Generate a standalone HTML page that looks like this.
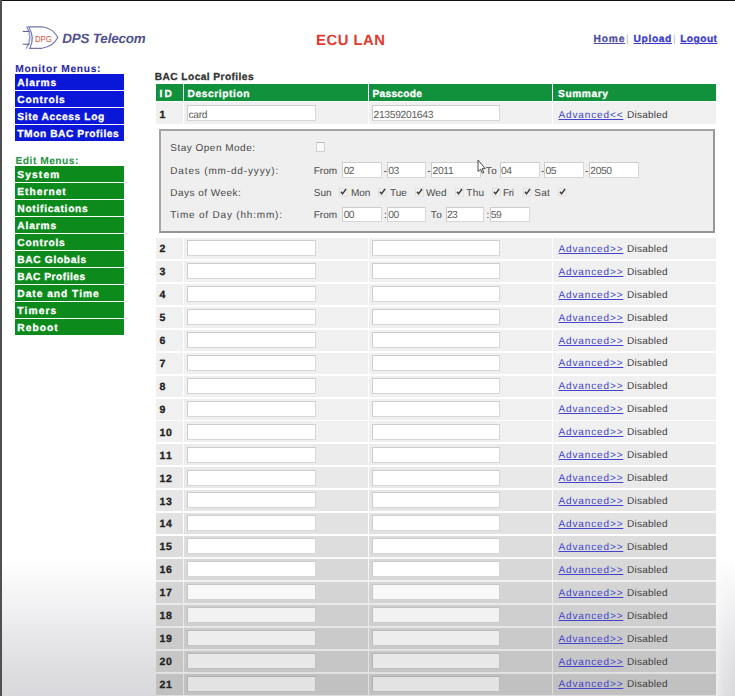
<!DOCTYPE html>
<html><head><meta charset="utf-8"><style>
html,body{margin:0;padding:0;width:735px;height:696px;overflow:hidden;}
body{position:relative;background:linear-gradient(to bottom, rgba(255,255,255,0) 0px, rgba(255,255,255,0) 558px, rgb(247,247,248) 585px, rgb(240,240,242) 610px, rgb(230,230,233) 640px, rgb(222,222,225) 670px, rgb(216,216,220) 696px), #fff;}
.t{position:absolute;white-space:nowrap;font-family:"Liberation Sans",sans-serif;text-rendering:geometricPrecision;}
.b{position:absolute;}
#w{position:absolute;left:0;top:0;width:735px;height:696px;}
</style></head><body><div id="w">
<svg class="b" style="left:18px;top:22px" width="46" height="30" viewBox="18 22 46 30">
<path d="M28.6 26.8 L42 26.8 Q53 28.3 57.8 37.6 Q53 46.8 42 48.3 L29.8 48.3 Q35.3 37.5 28.6 26.8 Z" fill="#fff" stroke="#7474b4" stroke-width="1.15"/>
<path d="M26.6 26.4 Q33.4 37.5 26.2 48.7" fill="none" stroke="#9c9cdc" stroke-width="1.5"/>
<path d="M22.8 31.4 H29.4 M22.8 44.2 H29.6" stroke="#404070" stroke-width="0.9"/>
<text x="34.9" y="41.5" font-family="Liberation Sans" font-size="9.8" fill="#d9503f" textLength="17" lengthAdjust="spacingAndGlyphs">DPG</text>
</svg>
<div class="t" style="left:62.30px;top:32px;font-size:13.4px;line-height:13.4px;color:#50508f;letter-spacing:-0.175px;font-weight:bold;font-style:italic;">DPS Telecom</div>
<div class="t" style="left:316.00px;top:34px;font-size:14.8px;line-height:14.8px;color:#e23a2e;letter-spacing:0.537px;font-weight:bold;">ECU LAN</div>
<div class="t" style="left:593.60px;top:35px;font-size:10.2px;line-height:10.2px;color:#5050a0;letter-spacing:0.820px;font-weight:bold;-webkit-text-stroke:0.3px #5050a0;text-decoration:underline;">Home</div>
<div class="t" style="left:626.00px;top:35px;font-size:10px;line-height:10px;color:#bbb;">|</div>
<div class="t" style="left:633.60px;top:35px;font-size:10.2px;line-height:10.2px;color:#3a3ad0;letter-spacing:0.627px;font-weight:bold;-webkit-text-stroke:0.3px #3a3ad0;text-decoration:underline;">Upload</div>
<div class="t" style="left:673.00px;top:35px;font-size:10px;line-height:10px;color:#bbb;">|</div>
<div class="t" style="left:680.20px;top:35px;font-size:10.2px;line-height:10.2px;color:#3a3ad0;letter-spacing:0.450px;font-weight:bold;-webkit-text-stroke:0.3px #3a3ad0;text-decoration:underline;">Logout</div>
<div class="t" style="left:15.20px;top:65px;font-size:10.2px;line-height:10.2px;color:#2a2aa8;letter-spacing:0.729px;font-weight:bold;-webkit-text-stroke:0.1px #2a2aa8;">Monitor Menus:</div>
<div class="b" style="left:15.00px;top:74.00px;width:109.00px;height:16.00px;background:#0a16d8;"></div>
<div class="t" style="left:17.30px;top:79px;font-size:10.2px;line-height:10.2px;color:#fff;letter-spacing:0.843px;font-weight:bold;-webkit-text-stroke:0.3px #fff;">Alarms</div>
<div class="b" style="left:15.00px;top:91.00px;width:109.00px;height:16.00px;background:#0a16d8;"></div>
<div class="t" style="left:17.30px;top:96px;font-size:10.2px;line-height:10.2px;color:#fff;letter-spacing:0.795px;font-weight:bold;-webkit-text-stroke:0.3px #fff;">Controls</div>
<div class="b" style="left:15.00px;top:108.00px;width:109.00px;height:16.00px;background:#0a16d8;"></div>
<div class="t" style="left:17.30px;top:113px;font-size:10.2px;line-height:10.2px;color:#fff;letter-spacing:0.613px;font-weight:bold;-webkit-text-stroke:0.3px #fff;">Site Access Log</div>
<div class="b" style="left:15.00px;top:125.00px;width:109.00px;height:16.00px;background:#0a16d8;"></div>
<div class="t" style="left:17.30px;top:130px;font-size:10.2px;line-height:10.2px;color:#fff;letter-spacing:0.571px;font-weight:bold;-webkit-text-stroke:0.3px #fff;">TMon BAC Profiles</div>
<div class="t" style="left:15.50px;top:157px;font-size:10.2px;line-height:10.2px;color:#2a944c;letter-spacing:0.520px;font-weight:bold;-webkit-text-stroke:0.1px #2a944c;">Edit Menus:</div>
<div class="b" style="left:15.00px;top:166.00px;width:109.00px;height:16.00px;background:#0c8a1c;"></div>
<div class="t" style="left:17.30px;top:171px;font-size:10.2px;line-height:10.2px;color:#fff;letter-spacing:1.142px;font-weight:bold;-webkit-text-stroke:0.3px #fff;">System</div>
<div class="b" style="left:15.00px;top:183.00px;width:109.00px;height:16.00px;background:#0c8a1c;"></div>
<div class="t" style="left:17.30px;top:188px;font-size:10.2px;line-height:10.2px;color:#fff;letter-spacing:1.018px;font-weight:bold;-webkit-text-stroke:0.3px #fff;">Ethernet</div>
<div class="b" style="left:15.00px;top:200.00px;width:109.00px;height:16.00px;background:#0c8a1c;"></div>
<div class="t" style="left:17.30px;top:205px;font-size:10.2px;line-height:10.2px;color:#fff;letter-spacing:0.728px;font-weight:bold;-webkit-text-stroke:0.3px #fff;">Notifications</div>
<div class="b" style="left:15.00px;top:217.00px;width:109.00px;height:16.00px;background:#0c8a1c;"></div>
<div class="t" style="left:17.30px;top:222px;font-size:10.2px;line-height:10.2px;color:#fff;letter-spacing:0.843px;font-weight:bold;-webkit-text-stroke:0.3px #fff;">Alarms</div>
<div class="b" style="left:15.00px;top:234.00px;width:109.00px;height:16.00px;background:#0c8a1c;"></div>
<div class="t" style="left:17.30px;top:239px;font-size:10.2px;line-height:10.2px;color:#fff;letter-spacing:0.795px;font-weight:bold;-webkit-text-stroke:0.3px #fff;">Controls</div>
<div class="b" style="left:15.00px;top:251.00px;width:109.00px;height:16.00px;background:#0c8a1c;"></div>
<div class="t" style="left:17.30px;top:256px;font-size:10.2px;line-height:10.2px;color:#fff;letter-spacing:0.666px;font-weight:bold;-webkit-text-stroke:0.3px #fff;">BAC Globals</div>
<div class="b" style="left:15.00px;top:268.00px;width:109.00px;height:16.00px;background:#0c8a1c;"></div>
<div class="t" style="left:17.30px;top:273px;font-size:10.2px;line-height:10.2px;color:#fff;letter-spacing:0.514px;font-weight:bold;-webkit-text-stroke:0.3px #fff;">BAC Profiles</div>
<div class="b" style="left:15.00px;top:285.00px;width:109.00px;height:16.00px;background:#0c8a1c;"></div>
<div class="t" style="left:17.30px;top:290px;font-size:10.2px;line-height:10.2px;color:#fff;letter-spacing:0.997px;font-weight:bold;-webkit-text-stroke:0.3px #fff;">Date and Time</div>
<div class="b" style="left:15.00px;top:302.00px;width:109.00px;height:16.00px;background:#0c8a1c;"></div>
<div class="t" style="left:17.30px;top:307px;font-size:10.2px;line-height:10.2px;color:#fff;letter-spacing:1.147px;font-weight:bold;-webkit-text-stroke:0.3px #fff;">Timers</div>
<div class="b" style="left:15.00px;top:319.00px;width:109.00px;height:16.00px;background:#0c8a1c;"></div>
<div class="t" style="left:17.30px;top:324px;font-size:10.2px;line-height:10.2px;color:#fff;letter-spacing:1.074px;font-weight:bold;-webkit-text-stroke:0.3px #fff;">Reboot</div>
<div class="t" style="left:154.80px;top:73px;font-size:10.2px;line-height:10.2px;color:#333;letter-spacing:0.416px;font-weight:bold;-webkit-text-stroke:0.3px #333;">BAC Local Profiles</div>
<div class="b" style="left:156.30px;top:236.00px;width:559.70px;height:460.00px;background:linear-gradient(to bottom,#fff 0px,#fff 300px,#ebebeb 367px,#dedede 460px);"></div>
<div class="b" style="left:156.30px;top:84.20px;width:26.60px;height:17.20px;background:#12913d;"></div>
<div class="b" style="left:184.10px;top:84.20px;width:183.50px;height:17.20px;background:#12913d;"></div>
<div class="b" style="left:369.00px;top:84.20px;width:182.60px;height:17.20px;background:#12913d;"></div>
<div class="b" style="left:553.00px;top:84.20px;width:163.00px;height:17.20px;background:#12913d;"></div>
<div class="t" style="left:159.50px;top:90px;font-size:10.2px;line-height:10.2px;color:#fff;letter-spacing:2.100px;font-weight:bold;-webkit-text-stroke:0.3px #fff;">ID</div>
<div class="t" style="left:187.60px;top:90px;font-size:10.2px;line-height:10.2px;color:#fff;letter-spacing:0.589px;font-weight:bold;-webkit-text-stroke:0.3px #fff;">Description</div>
<div class="t" style="left:372.50px;top:90px;font-size:10.2px;line-height:10.2px;color:#fff;letter-spacing:0.267px;font-weight:bold;-webkit-text-stroke:0.3px #fff;">Passcode</div>
<div class="t" style="left:558.00px;top:90px;font-size:10.2px;line-height:10.2px;color:#fff;letter-spacing:0.585px;font-weight:bold;-webkit-text-stroke:0.3px #fff;">Summary</div>
<div class="b" style="left:156.30px;top:102.40px;width:26.60px;height:21.40px;background:rgb(240,240,240);"></div>
<div class="b" style="left:184.10px;top:102.40px;width:183.50px;height:21.40px;background:rgb(240,240,240);"></div>
<div class="b" style="left:369.00px;top:102.40px;width:182.60px;height:21.40px;background:rgb(240,240,240);"></div>
<div class="b" style="left:553.00px;top:102.40px;width:163.00px;height:21.40px;background:rgb(240,240,240);"></div>
<div class="t" style="left:159.50px;top:110px;font-size:10.5px;line-height:10.5px;color:#222;letter-spacing:0.000px;font-weight:bold;-webkit-text-stroke:0.3px #222;">1</div>
<div class="b" style="left:187.20px;top:105.20px;width:128.40px;height:16.00px;background:rgb(255,255,255);border:1px solid rgb(215,215,215);border-top-color:rgb(205,205,205);border-left-color:rgb(205,205,205);box-sizing:border-box;"></div>
<div class="t" style="left:188.50px;top:111px;font-size:10.3px;line-height:10.3px;color:#5c5c5c;letter-spacing:-0.324px;">card</div>
<div class="b" style="left:372.20px;top:105.20px;width:127.80px;height:16.00px;background:rgb(255,255,255);border:1px solid rgb(215,215,215);border-top-color:rgb(205,205,205);border-left-color:rgb(205,205,205);box-sizing:border-box;"></div>
<div class="t" style="left:373.50px;top:111px;font-size:10.3px;line-height:10.3px;color:#5c5c5c;letter-spacing:-0.306px;">21359201643</div>
<div class="t" style="left:558.50px;top:111px;font-size:10px;line-height:10px;color:#4343cc;letter-spacing:0.871px;text-decoration:underline;">Advanced&lt;&lt;</div>
<div class="t" style="left:627.00px;top:111px;font-size:10px;line-height:10px;color:#3c3c3c;letter-spacing:0.241px;">Disabled</div>
<div class="b" style="left:159.00px;top:129.00px;width:556.00px;height:104.00px;background:#efefef;border:2px solid #a4a4a4;border-bottom-color:#969696;border-right-color:#969696;box-sizing:border-box;"></div>
<div class="t" style="left:170.30px;top:144px;font-size:10px;line-height:10px;color:#484848;letter-spacing:0.491px;">Stay Open Mode:</div>
<div class="t" style="left:170.30px;top:167px;font-size:10px;line-height:10px;color:#484848;letter-spacing:0.845px;">Dates (mm-dd-yyyy):</div>
<div class="t" style="left:170.30px;top:189px;font-size:10px;line-height:10px;color:#484848;letter-spacing:0.472px;">Days of Week:</div>
<div class="t" style="left:170.30px;top:211px;font-size:10px;line-height:10px;color:#484848;letter-spacing:0.810px;">Time of Day (hh:mm):</div>
<div class="b" style="left:316.20px;top:142.00px;width:8.50px;height:9.70px;background:#fafafa;border:1px solid #d0d0d0;border-top-color:#bcbcbc;border-radius:1px;box-sizing:border-box;"></div>
<div class="t" style="left:313.70px;top:167px;font-size:10px;line-height:10px;color:#484848;letter-spacing:0.056px;">From</div>
<div class="b" style="left:342.40px;top:162.00px;width:40.00px;height:15.50px;background:rgb(255,255,255);border:1px solid rgb(215,215,215);border-top-color:rgb(205,205,205);border-left-color:rgb(205,205,205);box-sizing:border-box;"></div>
<div class="t" style="left:343.70px;top:167px;font-size:10.3px;line-height:10.3px;color:#5c5c5c;letter-spacing:-0.556px;">02</div>
<div class="t" style="left:383.40px;top:167px;font-size:10px;line-height:10px;color:#333;">-</div>
<div class="b" style="left:387.00px;top:162.00px;width:39.00px;height:15.50px;background:rgb(255,255,255);border:1px solid rgb(215,215,215);border-top-color:rgb(205,205,205);border-left-color:rgb(205,205,205);box-sizing:border-box;"></div>
<div class="t" style="left:388.30px;top:167px;font-size:10.3px;line-height:10.3px;color:#5c5c5c;letter-spacing:-0.556px;">03</div>
<div class="t" style="left:427.30px;top:167px;font-size:10px;line-height:10px;color:#333;">-</div>
<div class="b" style="left:431.30px;top:162.00px;width:49.70px;height:15.50px;background:rgb(255,255,255);border:1px solid rgb(215,215,215);border-top-color:rgb(205,205,205);border-left-color:rgb(205,205,205);box-sizing:border-box;"></div>
<div class="t" style="left:432.60px;top:167px;font-size:10.3px;line-height:10.3px;color:#5c5c5c;letter-spacing:-0.358px;">2011</div>
<div class="t" style="left:485.70px;top:167px;font-size:10px;line-height:10px;color:#484848;letter-spacing:0.438px;">To</div>
<div class="b" style="left:499.80px;top:162.00px;width:40.00px;height:15.50px;background:rgb(255,255,255);border:1px solid rgb(215,215,215);border-top-color:rgb(205,205,205);border-left-color:rgb(205,205,205);box-sizing:border-box;"></div>
<div class="t" style="left:501.10px;top:167px;font-size:10.3px;line-height:10.3px;color:#5c5c5c;letter-spacing:-0.556px;">04</div>
<div class="t" style="left:541.00px;top:167px;font-size:10px;line-height:10px;color:#333;">-</div>
<div class="b" style="left:544.20px;top:162.00px;width:39.80px;height:15.50px;background:rgb(255,255,255);border:1px solid rgb(215,215,215);border-top-color:rgb(205,205,205);border-left-color:rgb(205,205,205);box-sizing:border-box;"></div>
<div class="t" style="left:545.50px;top:167px;font-size:10.3px;line-height:10.3px;color:#5c5c5c;letter-spacing:-0.556px;">05</div>
<div class="t" style="left:585.00px;top:167px;font-size:10px;line-height:10px;color:#333;">-</div>
<div class="b" style="left:589.00px;top:162.00px;width:50.00px;height:15.50px;background:rgb(255,255,255);border:1px solid rgb(215,215,215);border-top-color:rgb(205,205,205);border-left-color:rgb(205,205,205);box-sizing:border-box;"></div>
<div class="t" style="left:590.30px;top:167px;font-size:10.3px;line-height:10.3px;color:#5c5c5c;letter-spacing:-0.371px;">2050</div>
<div class="t" style="left:313.70px;top:189px;font-size:10px;line-height:10px;color:#484848;letter-spacing:0.053px;">Sun</div>
<svg class="b" style="left:338.70px;top:187.6px" width="9" height="9" viewBox="0 0 9 9"><rect x="0.5" y="0.8" width="7.6" height="7.2" fill="#f4f4f4" stroke="#dedede" stroke-width="1"/><path d="M1.9 3.8 L3.6 5.8 L7.0 1.0" fill="none" stroke="#3c3c3c" stroke-width="1.45"/></svg>
<div class="t" style="left:351.00px;top:189px;font-size:10px;line-height:10px;color:#484848;letter-spacing:-0.077px;">Mon</div>
<svg class="b" style="left:377.50px;top:187.6px" width="9" height="9" viewBox="0 0 9 9"><rect x="0.5" y="0.8" width="7.6" height="7.2" fill="#f4f4f4" stroke="#dedede" stroke-width="1"/><path d="M1.9 3.8 L3.6 5.8 L7.0 1.0" fill="none" stroke="#3c3c3c" stroke-width="1.45"/></svg>
<div class="t" style="left:389.90px;top:189px;font-size:10px;line-height:10px;color:#484848;letter-spacing:0.070px;">Tue</div>
<svg class="b" style="left:414.50px;top:187.6px" width="9" height="9" viewBox="0 0 9 9"><rect x="0.5" y="0.8" width="7.6" height="7.2" fill="#f4f4f4" stroke="#dedede" stroke-width="1"/><path d="M1.9 3.8 L3.6 5.8 L7.0 1.0" fill="none" stroke="#3c3c3c" stroke-width="1.45"/></svg>
<div class="t" style="left:426.00px;top:189px;font-size:10px;line-height:10px;color:#484848;letter-spacing:0.059px;">Wed</div>
<svg class="b" style="left:454.80px;top:187.6px" width="9" height="9" viewBox="0 0 9 9"><rect x="0.5" y="0.8" width="7.6" height="7.2" fill="#f4f4f4" stroke="#dedede" stroke-width="1"/><path d="M1.9 3.8 L3.6 5.8 L7.0 1.0" fill="none" stroke="#3c3c3c" stroke-width="1.45"/></svg>
<div class="t" style="left:466.30px;top:189px;font-size:10px;line-height:10px;color:#484848;letter-spacing:0.234px;">Thu</div>
<svg class="b" style="left:492.00px;top:187.6px" width="9" height="9" viewBox="0 0 9 9"><rect x="0.5" y="0.8" width="7.6" height="7.2" fill="#f4f4f4" stroke="#dedede" stroke-width="1"/><path d="M1.9 3.8 L3.6 5.8 L7.0 1.0" fill="none" stroke="#3c3c3c" stroke-width="1.45"/></svg>
<div class="t" style="left:502.90px;top:189px;font-size:10px;line-height:10px;color:#484848;letter-spacing:-0.330px;">Fri</div>
<svg class="b" style="left:523.00px;top:187.6px" width="9" height="9" viewBox="0 0 9 9"><rect x="0.5" y="0.8" width="7.6" height="7.2" fill="#f4f4f4" stroke="#dedede" stroke-width="1"/><path d="M1.9 3.8 L3.6 5.8 L7.0 1.0" fill="none" stroke="#3c3c3c" stroke-width="1.45"/></svg>
<div class="t" style="left:534.20px;top:189px;font-size:10px;line-height:10px;color:#484848;letter-spacing:0.295px;">Sat</div>
<svg class="b" style="left:557.70px;top:187.6px" width="9" height="9" viewBox="0 0 9 9"><rect x="0.5" y="0.8" width="7.6" height="7.2" fill="#f4f4f4" stroke="#dedede" stroke-width="1"/><path d="M1.9 3.8 L3.6 5.8 L7.0 1.0" fill="none" stroke="#3c3c3c" stroke-width="1.45"/></svg>
<div class="t" style="left:313.70px;top:211px;font-size:10px;line-height:10px;color:#484848;letter-spacing:0.056px;">From</div>
<div class="b" style="left:342.40px;top:206.80px;width:40.00px;height:15.00px;background:rgb(255,255,255);border:1px solid rgb(215,215,215);border-top-color:rgb(205,205,205);border-left-color:rgb(205,205,205);box-sizing:border-box;"></div>
<div class="t" style="left:343.70px;top:211px;font-size:10.3px;line-height:10.3px;color:#5c5c5c;letter-spacing:-0.556px;">00</div>
<div class="t" style="left:384.00px;top:211px;font-size:10px;line-height:10px;color:#333;">:</div>
<div class="b" style="left:387.00px;top:206.80px;width:39.00px;height:15.00px;background:rgb(255,255,255);border:1px solid rgb(215,215,215);border-top-color:rgb(205,205,205);border-left-color:rgb(205,205,205);box-sizing:border-box;"></div>
<div class="t" style="left:388.30px;top:211px;font-size:10.3px;line-height:10.3px;color:#5c5c5c;letter-spacing:-0.556px;">00</div>
<div class="t" style="left:430.80px;top:211px;font-size:10px;line-height:10px;color:#484848;letter-spacing:0.438px;">To</div>
<div class="b" style="left:445.60px;top:206.80px;width:38.60px;height:15.00px;background:rgb(255,255,255);border:1px solid rgb(215,215,215);border-top-color:rgb(205,205,205);border-left-color:rgb(205,205,205);box-sizing:border-box;"></div>
<div class="t" style="left:446.90px;top:211px;font-size:10.3px;line-height:10.3px;color:#5c5c5c;letter-spacing:-0.556px;">23</div>
<div class="t" style="left:486.60px;top:211px;font-size:10px;line-height:10px;color:#333;">:</div>
<div class="b" style="left:489.50px;top:206.80px;width:40.00px;height:15.00px;background:rgb(255,255,255);border:1px solid rgb(215,215,215);border-top-color:rgb(205,205,205);border-left-color:rgb(205,205,205);box-sizing:border-box;"></div>
<div class="t" style="left:490.80px;top:211px;font-size:10.3px;line-height:10.3px;color:#5c5c5c;letter-spacing:-0.556px;">59</div>
<div class="b" style="left:156.30px;top:238.00px;width:26.60px;height:21.00px;background:rgb(240,240,240);"></div>
<div class="b" style="left:184.10px;top:238.00px;width:183.50px;height:21.00px;background:rgb(240,240,240);"></div>
<div class="b" style="left:369.00px;top:238.00px;width:182.60px;height:21.00px;background:rgb(240,240,240);"></div>
<div class="b" style="left:553.00px;top:238.00px;width:163.00px;height:21.00px;background:rgb(240,240,240);"></div>
<div class="t" style="left:159.50px;top:244px;font-size:10.5px;line-height:10.5px;color:#222;letter-spacing:0.000px;font-weight:bold;-webkit-text-stroke:0.3px #222;">2</div>
<div class="b" style="left:187.20px;top:240.20px;width:128.40px;height:16.00px;background:rgb(255,255,255);border:1px solid rgb(215,215,215);border-top-color:rgb(205,205,205);border-left-color:rgb(205,205,205);box-sizing:border-box;"></div>
<div class="b" style="left:372.20px;top:240.20px;width:127.80px;height:16.00px;background:rgb(255,255,255);border:1px solid rgb(215,215,215);border-top-color:rgb(205,205,205);border-left-color:rgb(205,205,205);box-sizing:border-box;"></div>
<div class="t" style="left:558.50px;top:245px;font-size:10px;line-height:10px;color:#4343cc;letter-spacing:0.871px;text-decoration:underline;">Advanced&gt;&gt;</div>
<div class="t" style="left:627.00px;top:245px;font-size:10px;line-height:10px;color:#3c3c3c;letter-spacing:0.241px;">Disabled</div>
<div class="b" style="left:156.30px;top:260.93px;width:26.60px;height:21.00px;background:rgb(240,240,240);"></div>
<div class="b" style="left:184.10px;top:260.93px;width:183.50px;height:21.00px;background:rgb(240,240,240);"></div>
<div class="b" style="left:369.00px;top:260.93px;width:182.60px;height:21.00px;background:rgb(240,240,240);"></div>
<div class="b" style="left:553.00px;top:260.93px;width:163.00px;height:21.00px;background:rgb(240,240,240);"></div>
<div class="t" style="left:159.50px;top:267px;font-size:10.5px;line-height:10.5px;color:#222;letter-spacing:0.000px;font-weight:bold;-webkit-text-stroke:0.3px #222;">3</div>
<div class="b" style="left:187.20px;top:263.13px;width:128.40px;height:16.00px;background:rgb(255,255,255);border:1px solid rgb(215,215,215);border-top-color:rgb(205,205,205);border-left-color:rgb(205,205,205);box-sizing:border-box;"></div>
<div class="b" style="left:372.20px;top:263.13px;width:127.80px;height:16.00px;background:rgb(255,255,255);border:1px solid rgb(215,215,215);border-top-color:rgb(205,205,205);border-left-color:rgb(205,205,205);box-sizing:border-box;"></div>
<div class="t" style="left:558.50px;top:268px;font-size:10px;line-height:10px;color:#4343cc;letter-spacing:0.871px;text-decoration:underline;">Advanced&gt;&gt;</div>
<div class="t" style="left:627.00px;top:268px;font-size:10px;line-height:10px;color:#3c3c3c;letter-spacing:0.241px;">Disabled</div>
<div class="b" style="left:156.30px;top:283.86px;width:26.60px;height:21.00px;background:rgb(240,240,240);"></div>
<div class="b" style="left:184.10px;top:283.86px;width:183.50px;height:21.00px;background:rgb(240,240,240);"></div>
<div class="b" style="left:369.00px;top:283.86px;width:182.60px;height:21.00px;background:rgb(240,240,240);"></div>
<div class="b" style="left:553.00px;top:283.86px;width:163.00px;height:21.00px;background:rgb(240,240,240);"></div>
<div class="t" style="left:159.50px;top:290px;font-size:10.5px;line-height:10.5px;color:#222;letter-spacing:0.000px;font-weight:bold;-webkit-text-stroke:0.3px #222;">4</div>
<div class="b" style="left:187.20px;top:286.06px;width:128.40px;height:16.00px;background:rgb(255,255,255);border:1px solid rgb(215,215,215);border-top-color:rgb(205,205,205);border-left-color:rgb(205,205,205);box-sizing:border-box;"></div>
<div class="b" style="left:372.20px;top:286.06px;width:127.80px;height:16.00px;background:rgb(255,255,255);border:1px solid rgb(215,215,215);border-top-color:rgb(205,205,205);border-left-color:rgb(205,205,205);box-sizing:border-box;"></div>
<div class="t" style="left:558.50px;top:291px;font-size:10px;line-height:10px;color:#4343cc;letter-spacing:0.871px;text-decoration:underline;">Advanced&gt;&gt;</div>
<div class="t" style="left:627.00px;top:291px;font-size:10px;line-height:10px;color:#3c3c3c;letter-spacing:0.241px;">Disabled</div>
<div class="b" style="left:156.30px;top:306.79px;width:26.60px;height:21.00px;background:rgb(240,240,240);"></div>
<div class="b" style="left:184.10px;top:306.79px;width:183.50px;height:21.00px;background:rgb(240,240,240);"></div>
<div class="b" style="left:369.00px;top:306.79px;width:182.60px;height:21.00px;background:rgb(240,240,240);"></div>
<div class="b" style="left:553.00px;top:306.79px;width:163.00px;height:21.00px;background:rgb(240,240,240);"></div>
<div class="t" style="left:159.50px;top:313px;font-size:10.5px;line-height:10.5px;color:#222;letter-spacing:0.000px;font-weight:bold;-webkit-text-stroke:0.3px #222;">5</div>
<div class="b" style="left:187.20px;top:308.99px;width:128.40px;height:16.00px;background:rgb(255,255,255);border:1px solid rgb(215,215,215);border-top-color:rgb(205,205,205);border-left-color:rgb(205,205,205);box-sizing:border-box;"></div>
<div class="b" style="left:372.20px;top:308.99px;width:127.80px;height:16.00px;background:rgb(255,255,255);border:1px solid rgb(215,215,215);border-top-color:rgb(205,205,205);border-left-color:rgb(205,205,205);box-sizing:border-box;"></div>
<div class="t" style="left:558.50px;top:314px;font-size:10px;line-height:10px;color:#4343cc;letter-spacing:0.871px;text-decoration:underline;">Advanced&gt;&gt;</div>
<div class="t" style="left:627.00px;top:314px;font-size:10px;line-height:10px;color:#3c3c3c;letter-spacing:0.241px;">Disabled</div>
<div class="b" style="left:156.30px;top:329.72px;width:26.60px;height:21.00px;background:rgb(240,240,240);"></div>
<div class="b" style="left:184.10px;top:329.72px;width:183.50px;height:21.00px;background:rgb(240,240,240);"></div>
<div class="b" style="left:369.00px;top:329.72px;width:182.60px;height:21.00px;background:rgb(240,240,240);"></div>
<div class="b" style="left:553.00px;top:329.72px;width:163.00px;height:21.00px;background:rgb(240,240,240);"></div>
<div class="t" style="left:159.50px;top:336px;font-size:10.5px;line-height:10.5px;color:#222;letter-spacing:0.000px;font-weight:bold;-webkit-text-stroke:0.3px #222;">6</div>
<div class="b" style="left:187.20px;top:331.92px;width:128.40px;height:16.00px;background:rgb(255,255,255);border:1px solid rgb(215,215,215);border-top-color:rgb(205,205,205);border-left-color:rgb(205,205,205);box-sizing:border-box;"></div>
<div class="b" style="left:372.20px;top:331.92px;width:127.80px;height:16.00px;background:rgb(255,255,255);border:1px solid rgb(215,215,215);border-top-color:rgb(205,205,205);border-left-color:rgb(205,205,205);box-sizing:border-box;"></div>
<div class="t" style="left:558.50px;top:337px;font-size:10px;line-height:10px;color:#4343cc;letter-spacing:0.871px;text-decoration:underline;">Advanced&gt;&gt;</div>
<div class="t" style="left:627.00px;top:337px;font-size:10px;line-height:10px;color:#3c3c3c;letter-spacing:0.241px;">Disabled</div>
<div class="b" style="left:156.30px;top:352.65px;width:26.60px;height:21.00px;background:rgb(240,240,240);"></div>
<div class="b" style="left:184.10px;top:352.65px;width:183.50px;height:21.00px;background:rgb(240,240,240);"></div>
<div class="b" style="left:369.00px;top:352.65px;width:182.60px;height:21.00px;background:rgb(240,240,240);"></div>
<div class="b" style="left:553.00px;top:352.65px;width:163.00px;height:21.00px;background:rgb(240,240,240);"></div>
<div class="t" style="left:159.50px;top:359px;font-size:10.5px;line-height:10.5px;color:#222;letter-spacing:0.000px;font-weight:bold;-webkit-text-stroke:0.3px #222;">7</div>
<div class="b" style="left:187.20px;top:354.85px;width:128.40px;height:16.00px;background:rgb(255,255,255);border:1px solid rgb(215,215,215);border-top-color:rgb(205,205,205);border-left-color:rgb(205,205,205);box-sizing:border-box;"></div>
<div class="b" style="left:372.20px;top:354.85px;width:127.80px;height:16.00px;background:rgb(255,255,255);border:1px solid rgb(215,215,215);border-top-color:rgb(205,205,205);border-left-color:rgb(205,205,205);box-sizing:border-box;"></div>
<div class="t" style="left:558.50px;top:359px;font-size:10px;line-height:10px;color:#4343cc;letter-spacing:0.871px;text-decoration:underline;">Advanced&gt;&gt;</div>
<div class="t" style="left:627.00px;top:359px;font-size:10px;line-height:10px;color:#3c3c3c;letter-spacing:0.241px;">Disabled</div>
<div class="b" style="left:156.30px;top:375.58px;width:26.60px;height:21.00px;background:rgb(240,240,240);"></div>
<div class="b" style="left:184.10px;top:375.58px;width:183.50px;height:21.00px;background:rgb(240,240,240);"></div>
<div class="b" style="left:369.00px;top:375.58px;width:182.60px;height:21.00px;background:rgb(240,240,240);"></div>
<div class="b" style="left:553.00px;top:375.58px;width:163.00px;height:21.00px;background:rgb(240,240,240);"></div>
<div class="t" style="left:159.50px;top:382px;font-size:10.5px;line-height:10.5px;color:#222;letter-spacing:0.000px;font-weight:bold;-webkit-text-stroke:0.3px #222;">8</div>
<div class="b" style="left:187.20px;top:377.78px;width:128.40px;height:16.00px;background:rgb(255,255,255);border:1px solid rgb(215,215,215);border-top-color:rgb(205,205,205);border-left-color:rgb(205,205,205);box-sizing:border-box;"></div>
<div class="b" style="left:372.20px;top:377.78px;width:127.80px;height:16.00px;background:rgb(255,255,255);border:1px solid rgb(215,215,215);border-top-color:rgb(205,205,205);border-left-color:rgb(205,205,205);box-sizing:border-box;"></div>
<div class="t" style="left:558.50px;top:382px;font-size:10px;line-height:10px;color:#4343cc;letter-spacing:0.871px;text-decoration:underline;">Advanced&gt;&gt;</div>
<div class="t" style="left:627.00px;top:382px;font-size:10px;line-height:10px;color:#3c3c3c;letter-spacing:0.241px;">Disabled</div>
<div class="b" style="left:156.30px;top:398.51px;width:26.60px;height:21.00px;background:rgb(240,240,240);"></div>
<div class="b" style="left:184.10px;top:398.51px;width:183.50px;height:21.00px;background:rgb(240,240,240);"></div>
<div class="b" style="left:369.00px;top:398.51px;width:182.60px;height:21.00px;background:rgb(240,240,240);"></div>
<div class="b" style="left:553.00px;top:398.51px;width:163.00px;height:21.00px;background:rgb(240,240,240);"></div>
<div class="t" style="left:159.50px;top:405px;font-size:10.5px;line-height:10.5px;color:#222;letter-spacing:0.000px;font-weight:bold;-webkit-text-stroke:0.3px #222;">9</div>
<div class="b" style="left:187.20px;top:400.71px;width:128.40px;height:16.00px;background:rgb(255,255,255);border:1px solid rgb(215,215,215);border-top-color:rgb(205,205,205);border-left-color:rgb(205,205,205);box-sizing:border-box;"></div>
<div class="b" style="left:372.20px;top:400.71px;width:127.80px;height:16.00px;background:rgb(255,255,255);border:1px solid rgb(215,215,215);border-top-color:rgb(205,205,205);border-left-color:rgb(205,205,205);box-sizing:border-box;"></div>
<div class="t" style="left:558.50px;top:405px;font-size:10px;line-height:10px;color:#4343cc;letter-spacing:0.871px;text-decoration:underline;">Advanced&gt;&gt;</div>
<div class="t" style="left:627.00px;top:405px;font-size:10px;line-height:10px;color:#3c3c3c;letter-spacing:0.241px;">Disabled</div>
<div class="b" style="left:156.30px;top:421.44px;width:26.60px;height:21.00px;background:rgb(240,240,240);"></div>
<div class="b" style="left:184.10px;top:421.44px;width:183.50px;height:21.00px;background:rgb(240,240,240);"></div>
<div class="b" style="left:369.00px;top:421.44px;width:182.60px;height:21.00px;background:rgb(240,240,240);"></div>
<div class="b" style="left:553.00px;top:421.44px;width:163.00px;height:21.00px;background:rgb(240,240,240);"></div>
<div class="t" style="left:159.50px;top:428px;font-size:10.5px;line-height:10.5px;color:#222;letter-spacing:0.720px;font-weight:bold;-webkit-text-stroke:0.3px #222;">10</div>
<div class="b" style="left:187.20px;top:423.64px;width:128.40px;height:16.00px;background:rgb(255,255,255);border:1px solid rgb(215,215,215);border-top-color:rgb(205,205,205);border-left-color:rgb(205,205,205);box-sizing:border-box;"></div>
<div class="b" style="left:372.20px;top:423.64px;width:127.80px;height:16.00px;background:rgb(255,255,255);border:1px solid rgb(215,215,215);border-top-color:rgb(205,205,205);border-left-color:rgb(205,205,205);box-sizing:border-box;"></div>
<div class="t" style="left:558.50px;top:428px;font-size:10px;line-height:10px;color:#4343cc;letter-spacing:0.871px;text-decoration:underline;">Advanced&gt;&gt;</div>
<div class="t" style="left:627.00px;top:428px;font-size:10px;line-height:10px;color:#3c3c3c;letter-spacing:0.241px;">Disabled</div>
<div class="b" style="left:156.30px;top:444.37px;width:26.60px;height:21.00px;background:rgb(236,236,236);"></div>
<div class="b" style="left:184.10px;top:444.37px;width:183.50px;height:21.00px;background:rgb(236,236,236);"></div>
<div class="b" style="left:369.00px;top:444.37px;width:182.60px;height:21.00px;background:rgb(236,236,236);"></div>
<div class="b" style="left:553.00px;top:444.37px;width:163.00px;height:21.00px;background:rgb(236,236,236);"></div>
<div class="t" style="left:159.50px;top:451px;font-size:10.5px;line-height:10.5px;color:#222;letter-spacing:1.300px;font-weight:bold;-webkit-text-stroke:0.3px #222;">11</div>
<div class="b" style="left:187.20px;top:446.57px;width:128.40px;height:16.00px;background:rgb(255,255,255);border:1px solid rgb(215,215,215);border-top-color:rgb(205,205,205);border-left-color:rgb(205,205,205);box-sizing:border-box;"></div>
<div class="b" style="left:372.20px;top:446.57px;width:127.80px;height:16.00px;background:rgb(255,255,255);border:1px solid rgb(215,215,215);border-top-color:rgb(205,205,205);border-left-color:rgb(205,205,205);box-sizing:border-box;"></div>
<div class="t" style="left:558.50px;top:451px;font-size:10px;line-height:10px;color:#4343cc;letter-spacing:0.871px;text-decoration:underline;">Advanced&gt;&gt;</div>
<div class="t" style="left:627.00px;top:451px;font-size:10px;line-height:10px;color:#3c3c3c;letter-spacing:0.241px;">Disabled</div>
<div class="b" style="left:156.30px;top:467.30px;width:26.60px;height:21.00px;background:rgb(233,233,233);"></div>
<div class="b" style="left:184.10px;top:467.30px;width:183.50px;height:21.00px;background:rgb(233,233,233);"></div>
<div class="b" style="left:369.00px;top:467.30px;width:182.60px;height:21.00px;background:rgb(233,233,233);"></div>
<div class="b" style="left:553.00px;top:467.30px;width:163.00px;height:21.00px;background:rgb(233,233,233);"></div>
<div class="t" style="left:159.50px;top:474px;font-size:10.5px;line-height:10.5px;color:#222;letter-spacing:0.720px;font-weight:bold;-webkit-text-stroke:0.3px #222;">12</div>
<div class="b" style="left:187.20px;top:469.50px;width:128.40px;height:16.00px;background:rgb(255,255,255);border:1px solid rgb(215,215,215);border-top-color:rgb(205,205,205);border-left-color:rgb(205,205,205);box-sizing:border-box;"></div>
<div class="b" style="left:372.20px;top:469.50px;width:127.80px;height:16.00px;background:rgb(255,255,255);border:1px solid rgb(215,215,215);border-top-color:rgb(205,205,205);border-left-color:rgb(205,205,205);box-sizing:border-box;"></div>
<div class="t" style="left:558.50px;top:474px;font-size:10px;line-height:10px;color:#4343cc;letter-spacing:0.871px;text-decoration:underline;">Advanced&gt;&gt;</div>
<div class="t" style="left:627.00px;top:474px;font-size:10px;line-height:10px;color:#3c3c3c;letter-spacing:0.241px;">Disabled</div>
<div class="b" style="left:156.30px;top:490.23px;width:26.60px;height:21.00px;background:rgb(230,230,230);"></div>
<div class="b" style="left:184.10px;top:490.23px;width:183.50px;height:21.00px;background:rgb(230,230,230);"></div>
<div class="b" style="left:369.00px;top:490.23px;width:182.60px;height:21.00px;background:rgb(230,230,230);"></div>
<div class="b" style="left:553.00px;top:490.23px;width:163.00px;height:21.00px;background:rgb(230,230,230);"></div>
<div class="t" style="left:159.50px;top:497px;font-size:10.5px;line-height:10.5px;color:#222;letter-spacing:0.720px;font-weight:bold;-webkit-text-stroke:0.3px #222;">13</div>
<div class="b" style="left:187.20px;top:492.43px;width:128.40px;height:16.00px;background:rgb(255,255,255);border:1px solid rgb(215,215,215);border-top-color:rgb(205,205,205);border-left-color:rgb(205,205,205);box-sizing:border-box;"></div>
<div class="b" style="left:372.20px;top:492.43px;width:127.80px;height:16.00px;background:rgb(255,255,255);border:1px solid rgb(215,215,215);border-top-color:rgb(205,205,205);border-left-color:rgb(205,205,205);box-sizing:border-box;"></div>
<div class="t" style="left:558.50px;top:497px;font-size:10px;line-height:10px;color:#4343cc;letter-spacing:0.871px;text-decoration:underline;">Advanced&gt;&gt;</div>
<div class="t" style="left:627.00px;top:497px;font-size:10px;line-height:10px;color:#3c3c3c;letter-spacing:0.241px;">Disabled</div>
<div class="b" style="left:156.30px;top:513.16px;width:26.60px;height:21.00px;background:rgb(226,226,226);"></div>
<div class="b" style="left:184.10px;top:513.16px;width:183.50px;height:21.00px;background:rgb(226,226,226);"></div>
<div class="b" style="left:369.00px;top:513.16px;width:182.60px;height:21.00px;background:rgb(226,226,226);"></div>
<div class="b" style="left:553.00px;top:513.16px;width:163.00px;height:21.00px;background:rgb(226,226,226);"></div>
<div class="t" style="left:159.50px;top:519px;font-size:10.5px;line-height:10.5px;color:#222;letter-spacing:0.720px;font-weight:bold;-webkit-text-stroke:0.3px #222;">14</div>
<div class="b" style="left:187.20px;top:515.36px;width:128.40px;height:16.00px;background:rgb(255,255,255);border:1px solid rgb(215,215,215);border-top-color:rgb(205,205,205);border-left-color:rgb(205,205,205);box-sizing:border-box;"></div>
<div class="b" style="left:372.20px;top:515.36px;width:127.80px;height:16.00px;background:rgb(255,255,255);border:1px solid rgb(215,215,215);border-top-color:rgb(205,205,205);border-left-color:rgb(205,205,205);box-sizing:border-box;"></div>
<div class="t" style="left:558.50px;top:520px;font-size:10px;line-height:10px;color:#4343cc;letter-spacing:0.871px;text-decoration:underline;">Advanced&gt;&gt;</div>
<div class="t" style="left:627.00px;top:520px;font-size:10px;line-height:10px;color:#3c3c3c;letter-spacing:0.241px;">Disabled</div>
<div class="b" style="left:156.30px;top:536.09px;width:26.60px;height:21.00px;background:rgb(221,221,221);"></div>
<div class="b" style="left:184.10px;top:536.09px;width:183.50px;height:21.00px;background:rgb(221,221,221);"></div>
<div class="b" style="left:369.00px;top:536.09px;width:182.60px;height:21.00px;background:rgb(221,221,221);"></div>
<div class="b" style="left:553.00px;top:536.09px;width:163.00px;height:21.00px;background:rgb(221,221,221);"></div>
<div class="t" style="left:159.50px;top:542px;font-size:10.5px;line-height:10.5px;color:#222;letter-spacing:0.720px;font-weight:bold;-webkit-text-stroke:0.3px #222;">15</div>
<div class="b" style="left:187.20px;top:538.29px;width:128.40px;height:16.00px;background:rgb(255,255,255);border:1px solid rgb(215,215,215);border-top-color:rgb(205,205,205);border-left-color:rgb(205,205,205);box-sizing:border-box;"></div>
<div class="b" style="left:372.20px;top:538.29px;width:127.80px;height:16.00px;background:rgb(255,255,255);border:1px solid rgb(215,215,215);border-top-color:rgb(205,205,205);border-left-color:rgb(205,205,205);box-sizing:border-box;"></div>
<div class="t" style="left:558.50px;top:543px;font-size:10px;line-height:10px;color:#4343cc;letter-spacing:0.871px;text-decoration:underline;">Advanced&gt;&gt;</div>
<div class="t" style="left:627.00px;top:543px;font-size:10px;line-height:10px;color:#3c3c3c;letter-spacing:0.241px;">Disabled</div>
<div class="b" style="left:156.30px;top:559.02px;width:26.60px;height:21.00px;background:rgb(216,216,216);"></div>
<div class="b" style="left:184.10px;top:559.02px;width:183.50px;height:21.00px;background:rgb(216,216,216);"></div>
<div class="b" style="left:369.00px;top:559.02px;width:182.60px;height:21.00px;background:rgb(216,216,216);"></div>
<div class="b" style="left:553.00px;top:559.02px;width:163.00px;height:21.00px;background:rgb(216,216,216);"></div>
<div class="t" style="left:159.50px;top:565px;font-size:10.5px;line-height:10.5px;color:#222;letter-spacing:0.720px;font-weight:bold;-webkit-text-stroke:0.3px #222;">16</div>
<div class="b" style="left:187.20px;top:561.22px;width:128.40px;height:16.00px;background:rgb(255,255,255);border:1px solid rgb(215,215,215);border-top-color:rgb(205,205,205);border-left-color:rgb(205,205,205);box-sizing:border-box;"></div>
<div class="b" style="left:372.20px;top:561.22px;width:127.80px;height:16.00px;background:rgb(255,255,255);border:1px solid rgb(215,215,215);border-top-color:rgb(205,205,205);border-left-color:rgb(205,205,205);box-sizing:border-box;"></div>
<div class="t" style="left:558.50px;top:566px;font-size:10px;line-height:10px;color:#4343cc;letter-spacing:0.871px;text-decoration:underline;">Advanced&gt;&gt;</div>
<div class="t" style="left:627.00px;top:566px;font-size:10px;line-height:10px;color:#3c3c3c;letter-spacing:0.241px;">Disabled</div>
<div class="b" style="left:156.30px;top:581.95px;width:26.60px;height:21.00px;background:rgb(212,212,212);"></div>
<div class="b" style="left:184.10px;top:581.95px;width:183.50px;height:21.00px;background:rgb(212,212,212);"></div>
<div class="b" style="left:369.00px;top:581.95px;width:182.60px;height:21.00px;background:rgb(212,212,212);"></div>
<div class="b" style="left:553.00px;top:581.95px;width:163.00px;height:21.00px;background:rgb(212,212,212);"></div>
<div class="t" style="left:159.50px;top:588px;font-size:10.5px;line-height:10.5px;color:#222;letter-spacing:0.720px;font-weight:bold;-webkit-text-stroke:0.3px #222;">17</div>
<div class="b" style="left:187.20px;top:584.15px;width:128.40px;height:16.00px;background:rgb(248,248,248);border:1px solid rgb(208,208,208);border-top-color:rgb(198,198,198);border-left-color:rgb(198,198,198);box-sizing:border-box;"></div>
<div class="b" style="left:372.20px;top:584.15px;width:127.80px;height:16.00px;background:rgb(248,248,248);border:1px solid rgb(208,208,208);border-top-color:rgb(198,198,198);border-left-color:rgb(198,198,198);box-sizing:border-box;"></div>
<div class="t" style="left:558.50px;top:589px;font-size:10px;line-height:10px;color:#4343cc;letter-spacing:0.871px;text-decoration:underline;">Advanced&gt;&gt;</div>
<div class="t" style="left:627.00px;top:589px;font-size:10px;line-height:10px;color:#3c3c3c;letter-spacing:0.241px;">Disabled</div>
<div class="b" style="left:156.30px;top:604.88px;width:26.60px;height:21.00px;background:rgb(207,207,207);"></div>
<div class="b" style="left:184.10px;top:604.88px;width:183.50px;height:21.00px;background:rgb(207,207,207);"></div>
<div class="b" style="left:369.00px;top:604.88px;width:182.60px;height:21.00px;background:rgb(207,207,207);"></div>
<div class="b" style="left:553.00px;top:604.88px;width:163.00px;height:21.00px;background:rgb(207,207,207);"></div>
<div class="t" style="left:159.50px;top:611px;font-size:10.5px;line-height:10.5px;color:#222;letter-spacing:0.720px;font-weight:bold;-webkit-text-stroke:0.3px #222;">18</div>
<div class="b" style="left:187.20px;top:607.08px;width:128.40px;height:16.00px;background:rgb(242,242,242);border:1px solid rgb(202,202,202);border-top-color:rgb(192,192,192);border-left-color:rgb(192,192,192);box-sizing:border-box;"></div>
<div class="b" style="left:372.20px;top:607.08px;width:127.80px;height:16.00px;background:rgb(242,242,242);border:1px solid rgb(202,202,202);border-top-color:rgb(192,192,192);border-left-color:rgb(192,192,192);box-sizing:border-box;"></div>
<div class="t" style="left:558.50px;top:612px;font-size:10px;line-height:10px;color:#4343cc;letter-spacing:0.871px;text-decoration:underline;">Advanced&gt;&gt;</div>
<div class="t" style="left:627.00px;top:612px;font-size:10px;line-height:10px;color:#3c3c3c;letter-spacing:0.241px;">Disabled</div>
<div class="b" style="left:156.30px;top:627.81px;width:26.60px;height:21.00px;background:rgb(202,202,202);"></div>
<div class="b" style="left:184.10px;top:627.81px;width:183.50px;height:21.00px;background:rgb(202,202,202);"></div>
<div class="b" style="left:369.00px;top:627.81px;width:182.60px;height:21.00px;background:rgb(202,202,202);"></div>
<div class="b" style="left:553.00px;top:627.81px;width:163.00px;height:21.00px;background:rgb(202,202,202);"></div>
<div class="t" style="left:159.50px;top:634px;font-size:10.5px;line-height:10.5px;color:#222;letter-spacing:0.720px;font-weight:bold;-webkit-text-stroke:0.3px #222;">19</div>
<div class="b" style="left:187.20px;top:630.01px;width:128.40px;height:16.00px;background:rgb(237,237,237);border:1px solid rgb(197,197,197);border-top-color:rgb(187,187,187);border-left-color:rgb(187,187,187);box-sizing:border-box;"></div>
<div class="b" style="left:372.20px;top:630.01px;width:127.80px;height:16.00px;background:rgb(237,237,237);border:1px solid rgb(197,197,197);border-top-color:rgb(187,187,187);border-left-color:rgb(187,187,187);box-sizing:border-box;"></div>
<div class="t" style="left:558.50px;top:635px;font-size:10px;line-height:10px;color:#4343cc;letter-spacing:0.871px;text-decoration:underline;">Advanced&gt;&gt;</div>
<div class="t" style="left:627.00px;top:635px;font-size:10px;line-height:10px;color:#3c3c3c;letter-spacing:0.241px;">Disabled</div>
<div class="b" style="left:156.30px;top:650.74px;width:26.60px;height:21.00px;background:rgb(198,198,198);"></div>
<div class="b" style="left:184.10px;top:650.74px;width:183.50px;height:21.00px;background:rgb(198,198,198);"></div>
<div class="b" style="left:369.00px;top:650.74px;width:182.60px;height:21.00px;background:rgb(198,198,198);"></div>
<div class="b" style="left:553.00px;top:650.74px;width:163.00px;height:21.00px;background:rgb(198,198,198);"></div>
<div class="t" style="left:159.50px;top:657px;font-size:10.5px;line-height:10.5px;color:#222;letter-spacing:0.720px;font-weight:bold;-webkit-text-stroke:0.3px #222;">20</div>
<div class="b" style="left:187.20px;top:652.94px;width:128.40px;height:16.00px;background:rgb(232,232,232);border:1px solid rgb(192,192,192);border-top-color:rgb(182,182,182);border-left-color:rgb(182,182,182);box-sizing:border-box;"></div>
<div class="b" style="left:372.20px;top:652.94px;width:127.80px;height:16.00px;background:rgb(232,232,232);border:1px solid rgb(192,192,192);border-top-color:rgb(182,182,182);border-left-color:rgb(182,182,182);box-sizing:border-box;"></div>
<div class="t" style="left:558.50px;top:658px;font-size:10px;line-height:10px;color:#4343cc;letter-spacing:0.871px;text-decoration:underline;">Advanced&gt;&gt;</div>
<div class="t" style="left:627.00px;top:658px;font-size:10px;line-height:10px;color:#3c3c3c;letter-spacing:0.241px;">Disabled</div>
<div class="b" style="left:156.30px;top:673.67px;width:26.60px;height:21.00px;background:rgb(193,193,193);"></div>
<div class="b" style="left:184.10px;top:673.67px;width:183.50px;height:21.00px;background:rgb(193,193,193);"></div>
<div class="b" style="left:369.00px;top:673.67px;width:182.60px;height:21.00px;background:rgb(193,193,193);"></div>
<div class="b" style="left:553.00px;top:673.67px;width:163.00px;height:21.00px;background:rgb(193,193,193);"></div>
<div class="t" style="left:159.50px;top:680px;font-size:10.5px;line-height:10.5px;color:#222;letter-spacing:0.720px;font-weight:bold;-webkit-text-stroke:0.3px #222;">21</div>
<div class="b" style="left:187.20px;top:675.87px;width:128.40px;height:16.00px;background:rgb(227,227,227);border:1px solid rgb(187,187,187);border-top-color:rgb(177,177,177);border-left-color:rgb(177,177,177);box-sizing:border-box;"></div>
<div class="b" style="left:372.20px;top:675.87px;width:127.80px;height:16.00px;background:rgb(227,227,227);border:1px solid rgb(187,187,187);border-top-color:rgb(177,177,177);border-left-color:rgb(177,177,177);box-sizing:border-box;"></div>
<div class="t" style="left:558.50px;top:680px;font-size:10px;line-height:10px;color:#4343cc;letter-spacing:0.871px;text-decoration:underline;">Advanced&gt;&gt;</div>
<div class="t" style="left:627.00px;top:680px;font-size:10px;line-height:10px;color:#3c3c3c;letter-spacing:0.241px;">Disabled</div>
<svg class="b" style="left:476px;top:158px" width="14" height="20" viewBox="0 0 14 20">
<path d="M2 2 L2 13.5 L4.6 11.2 L6.4 15.2 L7.8 14.6 L6.1 10.7 L9.2 10.6 Z" fill="#fff" stroke="#4a4a4a" stroke-width="1" stroke-linejoin="round"/></svg>
<div class="b" style="left:716.00px;top:540.00px;width:19.00px;height:156.00px;background:linear-gradient(to right, rgba(255,255,255,0.55) 0px, rgba(255,255,255,0.25) 6px, rgba(255,255,255,0) 19px);-webkit-mask-image:linear-gradient(to bottom, transparent 0px, black 60px);"></div>
<div class="b" style="left:0.00px;top:0.00px;width:735.00px;height:1.20px;background:#111;"></div>
<div class="b" style="left:0.00px;top:0.00px;width:1.50px;height:696.00px;background:#505050;"></div>
</div></body></html>
